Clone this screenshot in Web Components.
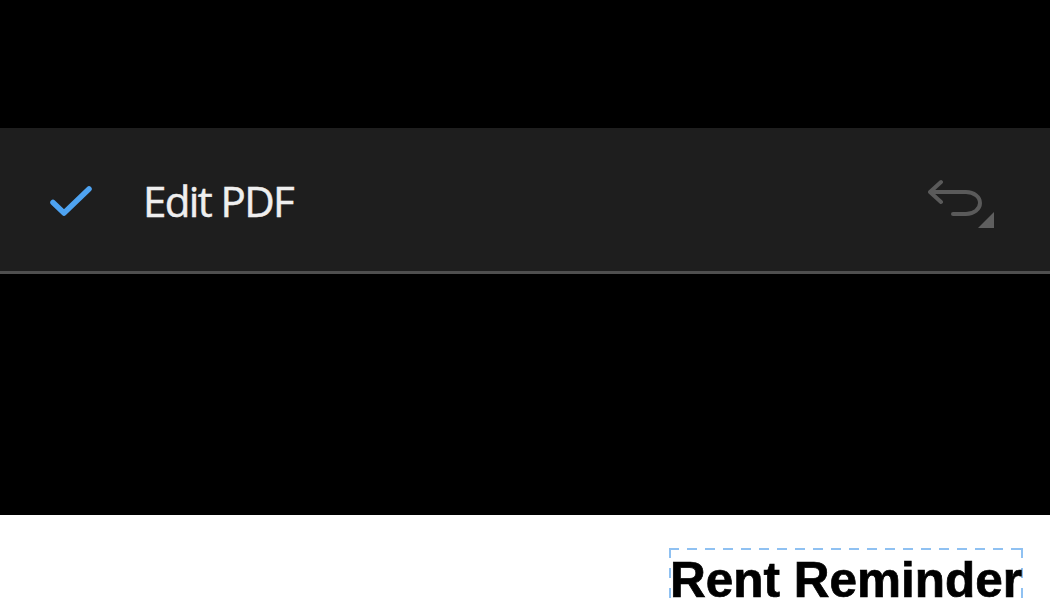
<!DOCTYPE html>
<html>
<head>
<meta charset="utf-8">
<title>Edit PDF</title>
<style>
html, body { margin: 0; height: 600px; overflow: hidden; background: #000; }
</style>
</head>
<body>
<edit-screen>
    <edit-toolbar title-text="Edit PDF"></edit-toolbar>
    <doc-page>
        <doc-heading>Rent Reminder</doc-heading>
    </doc-page>
</edit-screen>

<script>
"use strict"
class EditScreen extends HTMLElement{
    constructor(){
        super();
        this.attachShadow({mode: "open"});
    }

    connectedCallback(){
        this.shadowRoot.innerHTML = `
        <style>
        :host{
            display: flex;
            flex-direction: column;
            height: 600px;
            padding-top: 128px;
            box-sizing: border-box;
            background: #000;
            overflow: hidden;
        }
        </style>
        <slot></slot>`;
    }
}

class EditToolbar extends HTMLElement{
    constructor(){
        super();
        this.attachShadow({mode: "open"});
    }

    connectedCallback(){
        this.shadowRoot.innerHTML = `
        <style>
        :host{
            display: flex;
            align-items: center;
            flex: none;
            height: 146px;
            box-sizing: border-box;
            padding: 0 56px 0 50px;
            background: #1e1e1e;
            border-bottom: 3px solid #4f4f4f;
        }
        .check{ width: 42px; height: 32px; flex: none; margin-top: 3px; }
        .title{
            margin-left: 51px;
            font: 400 42px "Open Sans", sans-serif;
            letter-spacing: -1.600px;
            -webkit-text-stroke: 0.5px #efefef;
            color: #efefef;
            flex: 1;
            margin-top: 2px;
        }
        .undo{ width: 66px; height: 52px; flex: none; margin-top: 7px; }
        </style>
        <svg class="check" viewBox="0 0 42 32" fill="none">
            <path d="M3 17.500 L14 28 L39 4" stroke="#4ea3f1" stroke-width="5.500" stroke-linecap="round" stroke-linejoin="round"/>
        </svg>
        <span class="title">${this.getAttribute('title-text')}</span>
        <svg class="undo" viewBox="0 0 66 52" fill="none">
            <path d="M13 5 L2 15 L13 25 M2 15 H38 C46 15 52 20 52 26 C52 32 46 37 38 37 H25" stroke="#5a5a5a" stroke-width="4" stroke-linecap="round" stroke-linejoin="round"/>
            <path d="M66 35 V51 H50 Z" fill="#5f5f5f"/>
        </svg>`;
    }
}

class DocPage extends HTMLElement{
    constructor(){
        super();
        this.attachShadow({mode: "open"});
    }

    connectedCallback(){
        this.shadowRoot.innerHTML = `
        <style>
        :host{
            display: flex;
            justify-content: flex-end;
            align-items: flex-start;
            flex: none;
            height: 85px;
            margin-top: 241px;
            padding: 33px 27px 0 0;
            box-sizing: border-box;
            background: #fff;
        }
        </style>
        <slot></slot>`;
    }
}

class DocHeading extends HTMLElement{
    constructor(){
        super();
        this.attachShadow({mode: "open"});
    }

    connectedCallback(){
        this.shadowRoot.innerHTML = `
        <style>
        :host{
            display: block;
            padding: 12px 1px 0 1px;
            background:
                repeating-linear-gradient(90deg, #8fc1f2 0 10px, transparent 10px 18px) left top / 100% 2px no-repeat,
                repeating-linear-gradient(180deg, #8fc1f2 0 10px, transparent 10px 20px) left top / 2px 100% no-repeat,
                repeating-linear-gradient(180deg, #8fc1f2 0 10px, transparent 10px 20px) right top / 2px 100% no-repeat;
            font: 700 49.500px/40px "Liberation Sans", Arial, sans-serif;
            -webkit-text-stroke: 0.7px #000;
            color: #000;
            white-space: nowrap;
        }
        </style>
        <slot></slot>`;
    }
}

customElements.define('edit-screen', EditScreen);
customElements.define('edit-toolbar', EditToolbar);
customElements.define('doc-page', DocPage);
customElements.define('doc-heading', DocHeading);
</script>
</body>
</html>
